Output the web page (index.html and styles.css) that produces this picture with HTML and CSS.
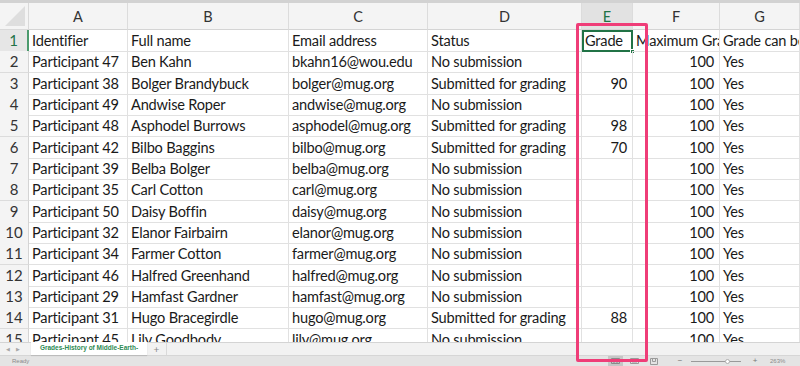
FILE: index.html
```html
<!DOCTYPE html>
<html lang="en">

<head>
    <meta charset="UTF-8">
    <meta name="viewport" content="width=device-width, initial-scale=1.0">
    <title>Grades</title>
    <link rel="stylesheet" href="styles.css">
</head>

<body>
    <div id="window">
        <div class="topstrip"></div>
        <div class="sheet">
            <div class="row colheads">
                <div class="corner"><span></span></div>
                <div class="ch">A</div>
                <div class="ch">B</div>
                <div class="ch">C</div>
                <div class="ch">D</div>
                <div class="ch sel">E</div>
                <div class="ch">F</div>
                <div class="ch">G</div>
            </div>
            <div class="row">
                <div class="rh sel">1</div>
                <div class="c">Identifier</div>
                <div class="c">Full name</div>
                <div class="c">Email address</div>
                <div class="c">Status</div>
                <div class="c active">Grade<i class="handle"></i></div>
                <div class="c">Maximum Grade</div>
                <div class="c">Grade can be changed</div>
            </div>
            <div class="row"><div class="rh">2</div><div class="c">Participant 47</div><div class="c">Ben Kahn</div><div class="c">bkahn16@wou.edu</div><div class="c">No submission</div><div class="c n"></div><div class="c n">100</div><div class="c">Yes</div></div>
            <div class="row"><div class="rh">3</div><div class="c">Participant 38</div><div class="c">Bolger Brandybuck</div><div class="c">bolger@mug.org</div><div class="c">Submitted for grading</div><div class="c n">90</div><div class="c n">100</div><div class="c">Yes</div></div>
            <div class="row"><div class="rh">4</div><div class="c">Participant 49</div><div class="c">Andwise Roper</div><div class="c">andwise@mug.org</div><div class="c">No submission</div><div class="c n"></div><div class="c n">100</div><div class="c">Yes</div></div>
            <div class="row"><div class="rh">5</div><div class="c">Participant 48</div><div class="c">Asphodel Burrows</div><div class="c">asphodel@mug.org</div><div class="c">Submitted for grading</div><div class="c n">98</div><div class="c n">100</div><div class="c">Yes</div></div>
            <div class="row"><div class="rh">6</div><div class="c">Participant 42</div><div class="c">Bilbo Baggins</div><div class="c">bilbo@mug.org</div><div class="c">Submitted for grading</div><div class="c n">70</div><div class="c n">100</div><div class="c">Yes</div></div>
            <div class="row"><div class="rh">7</div><div class="c">Participant 39</div><div class="c">Belba Bolger</div><div class="c">belba@mug.org</div><div class="c">No submission</div><div class="c n"></div><div class="c n">100</div><div class="c">Yes</div></div>
            <div class="row"><div class="rh">8</div><div class="c">Participant 35</div><div class="c">Carl Cotton</div><div class="c">carl@mug.org</div><div class="c">No submission</div><div class="c n"></div><div class="c n">100</div><div class="c">Yes</div></div>
            <div class="row"><div class="rh">9</div><div class="c">Participant 50</div><div class="c">Daisy Boffin</div><div class="c">daisy@mug.org</div><div class="c">No submission</div><div class="c n"></div><div class="c n">100</div><div class="c">Yes</div></div>
            <div class="row"><div class="rh">10</div><div class="c">Participant 32</div><div class="c">Elanor Fairbairn</div><div class="c">elanor@mug.org</div><div class="c">No submission</div><div class="c n"></div><div class="c n">100</div><div class="c">Yes</div></div>
            <div class="row"><div class="rh">11</div><div class="c">Participant 34</div><div class="c">Farmer Cotton</div><div class="c">farmer@mug.org</div><div class="c">No submission</div><div class="c n"></div><div class="c n">100</div><div class="c">Yes</div></div>
            <div class="row"><div class="rh">12</div><div class="c">Participant 46</div><div class="c">Halfred Greenhand</div><div class="c">halfred@mug.org</div><div class="c">No submission</div><div class="c n"></div><div class="c n">100</div><div class="c">Yes</div></div>
            <div class="row"><div class="rh">13</div><div class="c">Participant 29</div><div class="c">Hamfast Gardner</div><div class="c">hamfast@mug.org</div><div class="c">No submission</div><div class="c n"></div><div class="c n">100</div><div class="c">Yes</div></div>
            <div class="row"><div class="rh">14</div><div class="c">Participant 31</div><div class="c">Hugo Bracegirdle</div><div class="c">hugo@mug.org</div><div class="c">Submitted for grading</div><div class="c n">88</div><div class="c n">100</div><div class="c">Yes</div></div>
            <div class="row"><div class="rh">15</div><div class="c">Participant 45</div><div class="c">Lily Goodbody</div><div class="c">lily@mug.org</div><div class="c">No submission</div><div class="c n"></div><div class="c n">100</div><div class="c">Yes</div></div>
        </div>
        <div class="tabbar">
            <div class="navs"><span>&#9664;</span><span>&#9654;</span></div>
            <div class="tab">Grades-History of Middle-Earth-</div>
            <div class="addtab">+</div>
        </div>
        <div class="statusbar">
            <span class="ready">Ready</span>
            <div class="views">
                <span class="view on"><svg width="9" height="6" viewBox="0 0 9 6"><path d="M0.5 0.5h8v5h-8zM3 0.5v5M6 0.5v5" fill="none" stroke="#8a8a8a" stroke-width="1"/></svg></span>
                <span class="view"><svg width="9" height="6" viewBox="0 0 9 6"><path d="M0.5 0.5h8v5h-8zM2 2h5M2 4h5" fill="none" stroke="#9a9a9a" stroke-width="1"/></svg></span>
                <span class="view"><svg width="8" height="7" viewBox="0 0 8 7"><path d="M0.5 0.5h7v6h-7zM2.5 0.5v3h3v-3" fill="none" stroke="#9a9a9a" stroke-width="1"/></svg></span>
            </div>
            <div class="zoom">
                <span class="zbtn">&minus;</span>
                <div class="slider"><i></i></div>
                <span class="zbtn">+</span>
                <span class="pct">263%</span>
            </div>
        </div>
        <div class="highlight"></div>
    </div>
</body>
</html>
```

FILE: styles.css
```css
* {
    box-sizing: border-box;
}

body {
    margin: 0;
    font-family: "Lato", "Liberation Sans", sans-serif;
    background: #ffffff;
}

#window {
    position: relative;
    width: 800px;
    height: 366px;
    overflow: hidden;
}

.topstrip {
    height: 3px;
    background: #d2d2d2;
}

.sheet {
    height: 339px;
    overflow: hidden;
}

.row {
    display: grid;
    grid-template-columns: 29px 99px 161px 139px 154px 51px 87px 1fr;
    height: 21.33px;
}

.colheads {
    height: 27px;
    background: #f4f4f4;
}

.corner {
    position: relative;
    border-right: 1px solid #d9d9d9;
    border-bottom: 1px solid #d9d9d9;
}

.corner span {
    position: absolute;
    right: 3px;
    bottom: 3px;
    width: 0;
    height: 0;
    border-left: 20px solid transparent;
    border-bottom: 20px solid #dedede;
}

.ch {
    display: flex;
    align-items: center;
    justify-content: center;
    font-size: 14.5px;
    color: #333;
    border-right: 1px solid #dcdcdc;
    border-bottom: 1px solid #d4d4d4;
}

.ch.sel {
    background: #e2e2e2;
    color: #217346;
}

.rh {
    background: #f4f4f4;
    font-size: 15px;
    color: #333;
    text-align: center;
    line-height: 21px;
    border-right: 1px solid #d4d4d4;
    border-bottom: 1px solid #dcdcdc;
}

.rh.sel {
    color: #217346;
    background: #e6e6e6;
    border-right: 2px solid #4b9a6d;
}

.c {
    position: relative;
    font-size: 14.6px;
    letter-spacing: -0.2px;
    color: #1a1a1a;
    line-height: 21px;
    padding: 0 3px;
    white-space: nowrap;
    overflow: hidden;
    border-right: 1px solid #e1e1e1;
    border-bottom: 1px solid #e1e1e1;
}

.c.n {
    text-align: right;
    padding-right: 5px;
}

.c.active {
    overflow: visible;
    outline: 2px solid #217346;
    outline-offset: -2px;
}

.handle {
    position: absolute;
    right: -3px;
    bottom: -3px;
    width: 5px;
    height: 5px;
    background: #217346;
    border: 1px solid #fff;
}

.tabbar {
    display: flex;
    align-items: stretch;
    height: 13px;
    background: #f2f2f2;
    border-top: 1px solid #d4d4d4;
}

.navs {
    display: flex;
    gap: 6px;
    align-items: center;
    width: 31px;
    padding-left: 6px;
    font-size: 5px;
    line-height: 12px;
    color: #a8a8a8;
}

.tab {
    width: 116px;
    background: #ffffff;
    color: #2d8a53;
    font-family: "Liberation Sans", sans-serif;
    font-size: 6.5px;
    font-weight: bold;
    text-align: center;
    line-height: 11px;
    margin-top: -1px;
    box-shadow: 0 1px 1px rgba(0, 0, 0, 0.12);
}

.addtab {
    width: 20px;
    text-align: center;
    font-size: 10px;
    line-height: 12px;
    color: #8a8a8a;
    border-right: 1px solid #dadada;
}

.statusbar {
    display: flex;
    align-items: center;
    height: 11px;
    background: #e4e4e4;
    border-top: 1px solid #d6d6d6;
    font-family: "Liberation Sans", sans-serif;
    font-size: 6px;
    line-height: 10px;
    color: #8a8a8a;
}

.ready {
    padding-left: 12px;
    width: 608px;
}

.views {
    display: flex;
    align-items: center;
    gap: 4px;
}

.view {
    display: flex;
    align-items: center;
    justify-content: center;
    width: 15px;
    height: 10px;
}

.view.on {
    background: #c6c6c6;
}

.zoom {
    display: flex;
    align-items: center;
    margin-left: 14px;
}

.zbtn {
    font-size: 8px;
    color: #777;
    width: 10px;
    text-align: center;
}

.slider {
    position: relative;
    width: 50px;
    height: 1px;
    margin: 0 9px 0 6px;
    background: #9a9a9a;
}

.slider i {
    position: absolute;
    left: 34px;
    top: -2px;
    width: 5px;
    height: 5px;
    border-radius: 50%;
    background: #ffffff;
    border: 1px solid #b0b0b0;
}

.pct {
    margin-left: 10px;
}

.highlight {
    position: absolute;
    left: 576px;
    top: 23px;
    width: 72px;
    height: 339px;
    border: 3px solid #ef3d78;
    border-radius: 2px;
}
```
